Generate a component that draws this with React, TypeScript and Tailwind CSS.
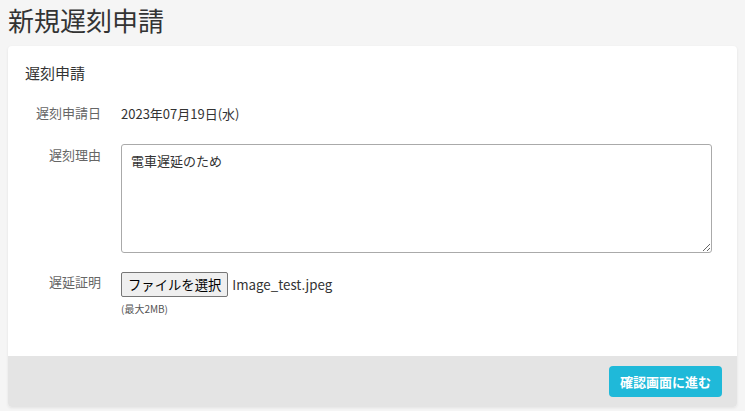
export default function App() {
  return (
    <div
      className="min-h-screen w-full bg-[#f5f5f5] px-2 pb-1"
      style={{ fontFamily: '"Noto Sans CJK JP", "Noto Sans", sans-serif' }}
    >
      <h1 className="pt-[2px] text-[26px] leading-[36px] text-[#333]">新規遅刻申請</h1>

      <div className="mt-[8px] overflow-hidden rounded-[4px] bg-white shadow-[0_1px_3px_rgba(0,0,0,0.08)]">
        <div className="px-[17px] pt-[16px] pb-[39px]">
          <h2 className="text-[15px] leading-[22px] text-[#333]">遅刻申請</h2>

          <div className="mt-[19px] flex items-start">
            <div className="w-[76px] text-right text-[13px] leading-[20px] text-[#666]">遅刻申請日</div>
            <div className="ml-[20px] pt-[1px] text-[13px] leading-[20px] text-[#333]">2023年07月19日(水)</div>
          </div>

          <div className="mt-[20px] flex items-start">
            <div className="w-[76px] pt-[1px] text-right text-[13px] leading-[20px] text-[#666]">遅刻理由</div>
            <textarea
              defaultValue="電車遅延のため"
              className="ml-[20px] h-[109px] w-[591px] rounded-[3px] border border-[#aaa] px-[9px] py-[6px] text-[13px] leading-[20px] text-[#333] outline-none"
            />
          </div>

          <div className="mt-[19px] flex items-start">
            <div className="w-[76px] text-right text-[13px] leading-[20px] text-[#666]">遅延証明</div>
            <div className="ml-[20px]">
              <div className="flex items-center">
                <button className="h-[25px] rounded-[2px] border border-[#767676] bg-[#efefef] px-[6px] text-[13.333px] leading-[20px] text-black">
                  ファイルを選択
                </button>
                <span className="ml-[4px] text-[13.333px] leading-[20px] text-[#333]">Image_test.jpeg</span>
              </div>
              <div className="mt-[4px] text-[10px] leading-[16px] text-[#555]">(最大2MB)</div>
            </div>
          </div>
        </div>

        <div className="flex h-[51px] items-center justify-end bg-[#e4e4e4] pr-[15px]">
          <button className="h-[31px] rounded-[4px] bg-[#1fb9d9] px-[11px] text-[13px] font-bold leading-[20px] text-white">
            確認画面に進む
          </button>
        </div>
      </div>
    </div>
  )
}
